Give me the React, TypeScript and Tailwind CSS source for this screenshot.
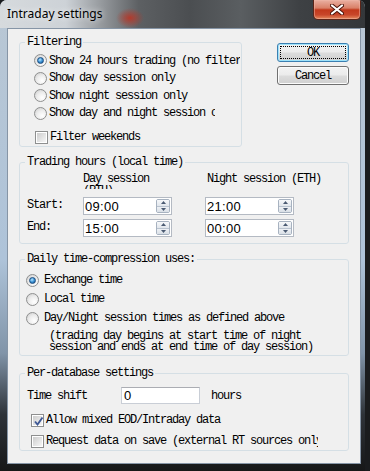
import type { ReactNode } from "react";

const mono = "font-['Liberation_Mono',monospace] text-[12px] tracking-[-1.2px] text-black";

function Radio({ on }: { on?: boolean }) {
  return (
    <span className="flex size-[13px] shrink-0 items-center justify-center rounded-full border border-[#8e8f8f] bg-[radial-gradient(circle_at_65%_70%,#ffffff_0%,#ececec_50%,#c9c9c9_100%)]">
      {on && (
        <span className="size-[7px] rounded-full border border-[#1d4d7f] bg-[radial-gradient(circle_at_40%_35%,#b8e6ff_0%,#3c93d6_50%,#0e4a86_100%)]" />
      )}
    </span>
  );
}

function Check({ on }: { on?: boolean }) {
  return (
    <span className="relative flex size-[13px] shrink-0 items-center justify-center border border-[#8e8f8f] bg-white">
      <span className="size-[9px] bg-[linear-gradient(135deg,#cdcdcd,#f6f6f6)]" />
      {on && (
        <svg className="absolute left-[1px] top-[1px]" width="11" height="11" viewBox="0 0 11 11">
          <path d="M2 5.5 L4.5 8.5 L9.5 1.5" fill="none" stroke="#3e5895" strokeWidth="1.9" />
        </svg>
      )}
    </span>
  );
}

function SpinButtons() {
  return (
    <span className="flex h-[14px] w-[14px] shrink-0 flex-col overflow-hidden rounded-[2px] border border-[#a7b2c0]">
      <span className="flex flex-1 items-center justify-center border-b border-[#b9c3cf] bg-[linear-gradient(180deg,#f6f8fa,#e1e6ec)]">
        <svg width="5" height="3" viewBox="0 0 5 3">
          <path d="M0 3 L2.5 0 L5 3 Z" fill="#4a5a72" />
        </svg>
      </span>
      <span className="flex flex-1 items-center justify-center bg-[linear-gradient(180deg,#eef1f5,#d9dfe6)]">
        <svg width="5" height="3" viewBox="0 0 5 3">
          <path d="M0 0 L5 0 L2.5 3 Z" fill="#4a5a72" />
        </svg>
      </span>
    </span>
  );
}

function TimeBox({ value }: { value: string }) {
  return (
    <div className="flex h-[18px] w-[89px] shrink-0 items-center border border-[#b4bac3] bg-white pl-[1px] pr-[1px]">
      <span className="flex-1 font-['Liberation_Sans',sans-serif] text-[13px] leading-none tracking-[0.3px] text-black">
        {value}
      </span>
      <SpinButtons />
    </div>
  );
}

function Group({ title, className, children }: { title: string; className: string; children: ReactNode }) {
  return (
    <fieldset className={`shrink-0 rounded-[3px] border border-[#d5dfe5] ${className}`}>
      <legend className={`ml-[5px] px-[2px] leading-[14px] ${mono}`}>{title}</legend>
      {children}
    </fieldset>
  );
}

function WinButton({ label, primary }: { label: string; primary?: boolean }) {
  return (
    <button
      className={`relative flex h-[19px] w-[72px] items-center justify-center rounded-[3px] border bg-[linear-gradient(180deg,#f3f3f3_0%,#ebebeb_48%,#dcdcdc_52%,#d0d0d0_100%)] ${mono} leading-none ${
        primary ? "border-[#3c7fb1] shadow-[inset_0_0_0_1px_#9fe3fb]" : "border-[#707070] shadow-[inset_0_0_0_1px_#fcfcfc]"
      }`}
    >
      {primary && <span className="absolute inset-[2px] border border-dotted border-black" />}
      <span className="relative">{label}</span>
    </button>
  );
}

export default function App() {
  return (
    <div className="h-[471px] w-[370px] overflow-hidden bg-[#1a1c1e]">
      <div className="flex h-[471px] w-[365px] flex-col overflow-hidden rounded-t-[7px] bg-[linear-gradient(180deg,#b9c7d4_0%,#aec3d9_55%,#8194a8_75%,#2e3339_88%,#161718_100%)]">
        {/* title bar */}
        <div className="flex h-[28px] shrink-0 items-start bg-[radial-gradient(ellipse_14px_10px_at_130px_18px,#b23a2c_0%,transparent_100%),linear-gradient(90deg,#d6dadd_0%,#cdd2d7_18%,#9a9ea2_27%,#5d6063_38%,#4b4e51_52%,#5a5e61_66%,#3e4144_82%,#34373a_100%)]">
          <span className="pl-[7px] pt-[6px] font-['Noto_Sans',sans-serif] text-[12px] leading-[16px] text-black [text-shadow:0_0_6px_#ffffff]">
            Intraday settings
          </span>
          <div className="ml-auto mr-[4px] flex h-[20px] w-[48px] items-center justify-center rounded-b-[5px] border border-t-0 border-[#5b2418] bg-[linear-gradient(180deg,#eab0a2_0%,#d98068_42%,#c2391c_52%,#c8462a_78%,#e58a5e_100%)] shadow-[inset_0_0_0_1px_#f0b8a880]">
            <svg width="14" height="11" viewBox="0 0 14 11">
              <path d="M2 1.5 L12 9.5 M12 1.5 L2 9.5" stroke="#4a1208" strokeWidth="4" strokeLinecap="round" />
              <path d="M2 1.5 L12 9.5 M12 1.5 L2 9.5" stroke="#ffffff" strokeWidth="2.2" strokeLinecap="round" />
            </svg>
          </div>
        </div>

        {/* client area */}
        <div className="ml-[7px] flex h-[436px] w-[354px] flex-col border border-[#8695a6] bg-[#f0f0f0] pl-[11px] pt-[6px]">
          <div className="flex items-start">
            <Group title="Filtering" className="h-[112px] w-[223px]">
              <div className={`flex flex-col pt-[3px] ${mono}`}>
                {[
                  { t: "Show 24 hours trading (no filtering)", on: true, w: "w-[220px]" },
                  { t: "Show day session only", on: false, w: "w-[220px]" },
                  { t: "Show night session only", on: false, w: "w-[220px]" },
                  { t: "Show day and night session only", on: false, w: "w-[195px]" },
                ].map((r) => (
                  <div key={r.t} className={`flex h-[17.5px] items-center gap-[2px] overflow-hidden whitespace-nowrap pl-[14px] ${r.w}`}>
                    <Radio on={r.on} />
                    <span>{r.t}</span>
                  </div>
                ))}
                <div className="mt-[6px] flex h-[18px] items-center gap-[2px] pl-[15px]">
                  <Check />
                  <span>Filter weekends</span>
                </div>
              </div>
            </Group>
            <div className="ml-[35px] mt-[8px] flex flex-col gap-[4px]">
              <WinButton label="OK" primary />
              <WinButton label="Cancel" />
            </div>
          </div>

          <Group title="Trading hours (local time)" className="mt-[8px] h-[89px] w-[330px]">
            <div className={`flex flex-col pl-[7px] ${mono}`}>
              <div className="mt-[4px] flex">
                <div className="ml-[56px] h-[16px] w-[89px] overflow-hidden leading-[12px]">Day session (RTH)</div>
                <div className="ml-[35px] leading-[12px]">Night session (ETH)</div>
              </div>
              <div className="mt-[8px] flex h-[18px] items-center">
                <span className="w-[56px] -translate-y-[1px]">Start:</span>
                <TimeBox value="09:00" />
                <span className="w-[33px]" />
                <TimeBox value="21:00" />
              </div>
              <div className="mt-[4px] flex h-[18px] items-center">
                <span className="w-[56px] -translate-y-[1px]">End:</span>
                <TimeBox value="15:00" />
                <span className="w-[33px]" />
                <TimeBox value="00:00" />
              </div>
            </div>
          </Group>

          <Group title="Daily time-compression uses:" className="mt-[8px] h-[104px] w-[330px]">
            <div className={`flex flex-col pt-[4.5px] ${mono}`}>
              {[
                { t: "Exchange time", on: true },
                { t: "Local time", on: false },
                { t: "Day/Night session times as defined above", on: false },
              ].map((r) => (
                <div key={r.t} className="flex h-[19px] items-center gap-[5px] whitespace-nowrap pl-[6px]">
                  <Radio on={r.on} />
                  <span>{r.t}</span>
                </div>
              ))}
              <div className="mt-[3px] pl-[29px] leading-[11px] whitespace-nowrap">
                <div>(trading day begins at start time of night</div>
                <div>session and ends at end time of day session)</div>
              </div>
            </div>
          </Group>

          <Group title="Per-database settings" className="mt-[10px] h-[85px] w-[330px]">
            <div className={`flex flex-col pt-[7px] ${mono}`}>
              <div className="flex h-[17px] items-center pl-[7px]">
                <span className="w-[94px]">Time shift</span>
                <div className="flex h-[17px] w-[79px] items-center border border-[#c9ced6] border-t-[#abadb3] bg-white pl-[2px] font-['Liberation_Sans',sans-serif] text-[13px] leading-none tracking-normal">
                  0
                </div>
                <span className="ml-[11px]">hours</span>
              </div>
              <div className="mt-[7px] flex h-[18px] items-center gap-[2px] pl-[11px]">
                <Check on />
                <span>Allow mixed EOD/Intraday data</span>
              </div>
              <div className="mt-[3px] flex h-[18px] w-[298px] items-center gap-[2px] overflow-hidden whitespace-nowrap pl-[11px]">
                <Check />
                <span>Request data on save (external RT sources only)</span>
              </div>
            </div>
          </Group>
        </div>
      </div>
    </div>
  );
}
